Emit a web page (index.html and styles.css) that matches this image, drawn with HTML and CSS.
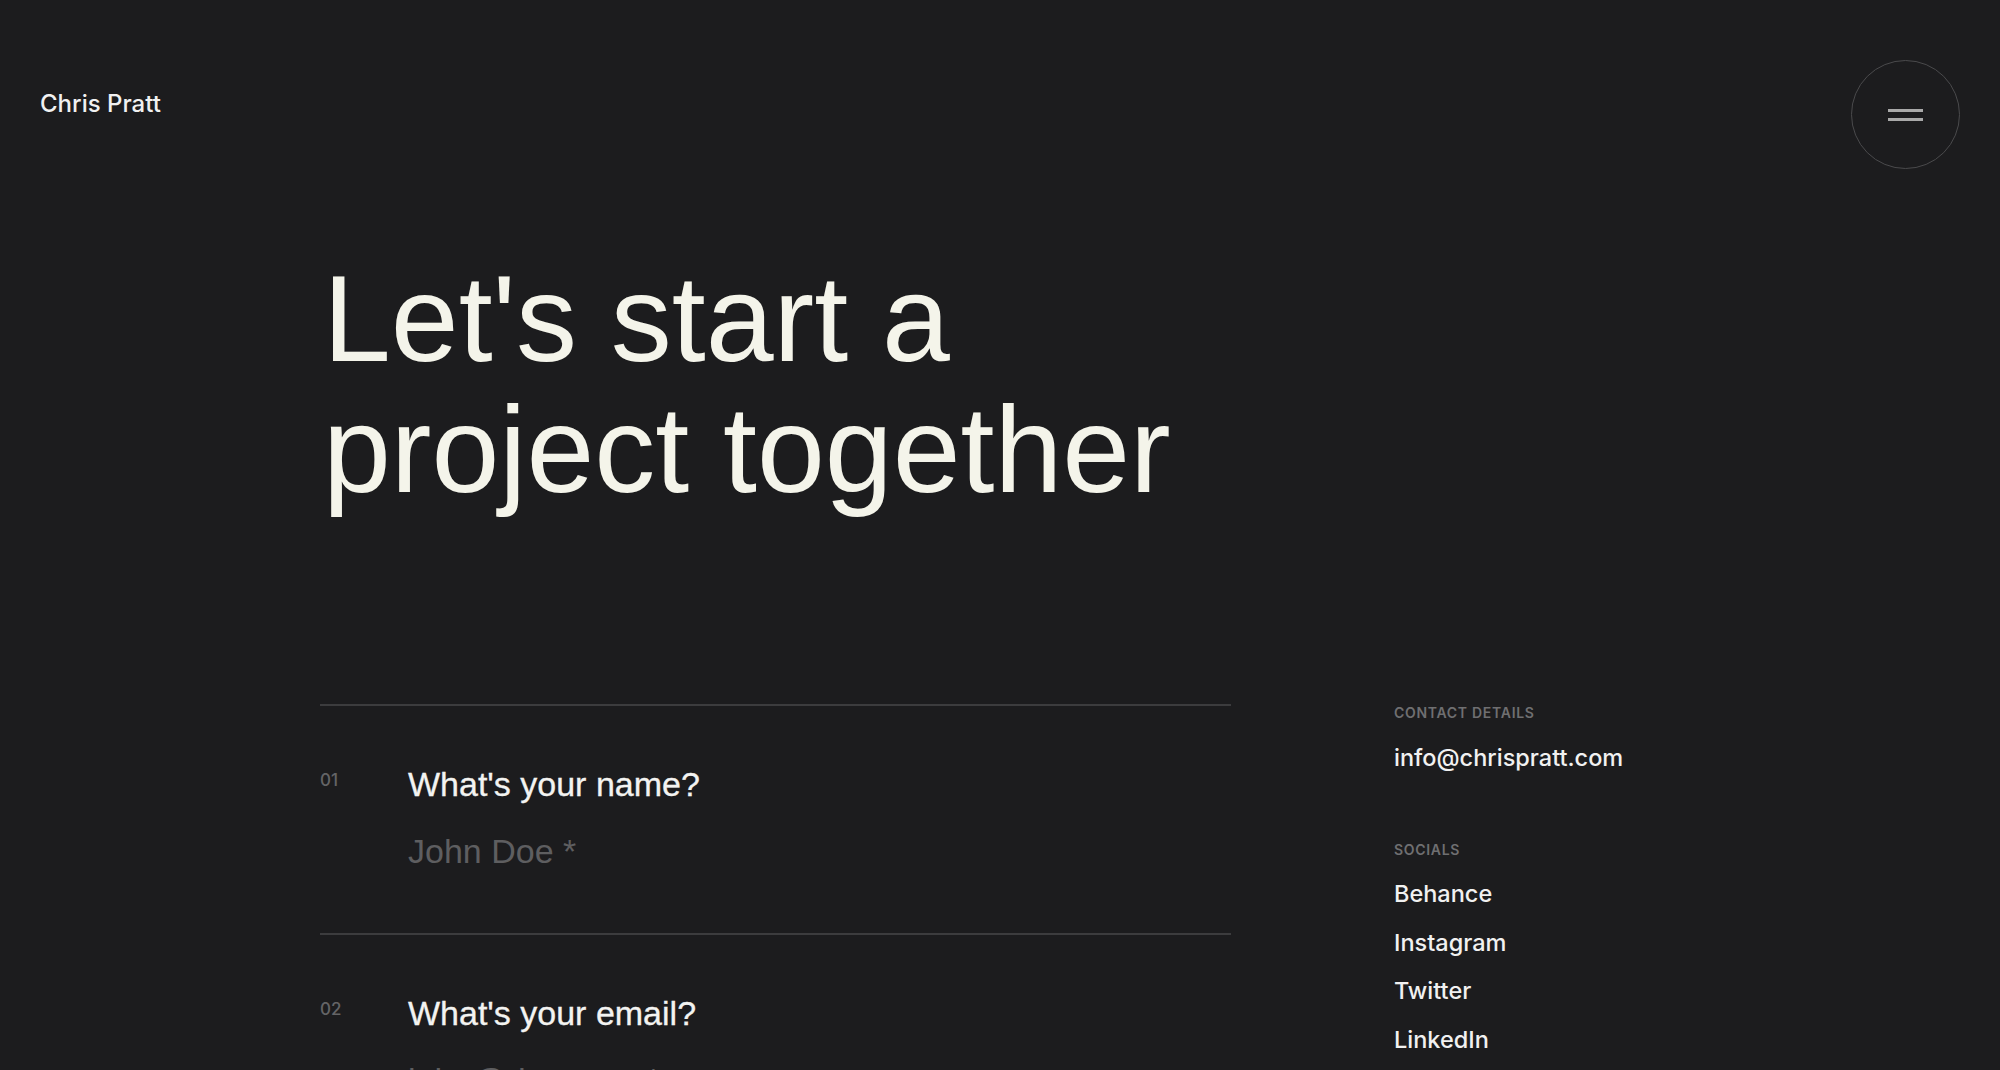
FILE: index.html
```html
<!DOCTYPE html>
<html lang="en">
<head>
<meta charset="utf-8">
<title>Contact — Chris Pratt</title>
<link rel="stylesheet" href="styles.css">
</head>
<body>
<header class="site-header">
  <a class="brand" href="#">Chris Pratt</a>
  <button class="menu-btn" type="button" aria-label="Open menu">
    <span class="menu-bar"></span>
    <span class="menu-bar"></span>
  </button>
</header>
<main class="contact">
  <h1 class="title">Let's start a<br>project together</h1>
  <div class="contact-body">
    <form class="form">
      <div class="field">
        <span class="field-num">01</span>
        <div class="field-main">
          <label class="field-label" for="name">What's your name?</label>
          <input class="field-input" id="name" type="text" placeholder="John Doe *">
        </div>
      </div>
      <div class="field">
        <span class="field-num">02</span>
        <div class="field-main">
          <label class="field-label" for="email">What's your email?</label>
          <input class="field-input" id="email" type="email" placeholder="john@doe.com *">
        </div>
      </div>
    </form>
    <aside class="details">
      <section class="details-group">
        <h5 class="details-title">Contact Details</h5>
        <a class="details-link" href="#">info@chrispratt.com</a>
      </section>
      <section class="details-group details-group-socials">
        <h5 class="details-title">Socials</h5>
        <ul class="social-list">
          <li><a class="details-link" href="#">Behance</a></li>
          <li><a class="details-link" href="#">Instagram</a></li>
          <li><a class="details-link" href="#">Twitter</a></li>
          <li><a class="details-link" href="#">LinkedIn</a></li>
        </ul>
      </section>
    </aside>
  </div>
</main>
</body>
</html>
```
FILE: styles.css
```css
* { box-sizing: border-box; }

html, body {
  margin: 0;
  padding: 0;
  height: 100%;
  overflow: hidden;
}

body {
  background: #1c1c1e;
  color: #f2f2f2;
  font-family: Inter, "Noto Sans", sans-serif;
}

a { color: inherit; text-decoration: none; }

.site-header {
  display: flex;
  justify-content: space-between;
  align-items: flex-start;
  padding: 60px 40px 0 40px;
}

.brand {
  margin-top: 30px;
  font-size: 24px;
  font-weight: 500;
  line-height: 28px;
  color: #f1f1f1;
}

.menu-btn {
  width: 109px;
  height: 109px;
  border-radius: 50%;
  border: 1px solid #4a4a4c;
  background: transparent;
  padding: 0;
  display: flex;
  flex-direction: column;
  align-items: center;
  justify-content: center;
  gap: 6px;
  cursor: pointer;
}

.menu-bar {
  display: block;
  width: 35px;
  height: 3px;
  background: #a9a9a9;
}

.contact {
  padding-left: 320px;
}

.title {
  margin: 85px 0 0 3px;
  font-family: "Liberation Sans", Arial, sans-serif;
  font-weight: 400;
  font-size: 122px;
  line-height: 131px;
  color: #f4f4ea;
}

.contact-body {
  margin-top: 188px;
  display: flex;
  align-items: flex-start;
  gap: 163px;
}

.form {
  width: 911px;
  margin: 0;
}

.field {
  display: flex;
  align-items: flex-start;
  border-top: 2px solid #3c3c3e;
  padding: 59px 0 63px 0;
}

.field-num {
  width: 88px;
  flex: none;
  margin-top: 5px;
  font-size: 17px;
  font-weight: 500;
  line-height: 20px;
  color: #646466;
}

.field-main {
  display: flex;
  flex-direction: column;
  gap: 29px;
  flex: 1;
}

.field-label {
  font-family: "Liberation Sans", Arial, sans-serif;
  font-size: 34px;
  line-height: 38px;
  color: #f3f3f1;
  -webkit-text-stroke: 0.3px #f3f3f1;
}

.field-input {
  height: 38px;
  padding: 0;
  border: 0;
  outline: none;
  background: transparent;
  font-family: "Liberation Sans", Arial, sans-serif;
  font-size: 34px;
  line-height: 38px;
  color: #f3f3f1;
}

.field-input::placeholder {
  color: #5e5e60;
  opacity: 1;
}

.details {
  display: flex;
  flex-direction: column;
}

.details-group {
  display: flex;
  flex-direction: column;
  gap: 23px;
}

.details-group-socials {
  margin-top: 69px;
  gap: 22px;
}

.details-title {
  margin: 0;
  font-size: 14px;
  line-height: 17px;
  font-weight: 600;
  letter-spacing: 0.05em;
  text-transform: uppercase;
  color: #6f6f71;
}

.details-link {
  display: block;
  font-size: 23.5px;
  line-height: 28px;
  font-weight: 500;
  color: #f1f1f1;
}

.social-list {
  list-style: none;
  margin: 0;
  padding: 0;
  display: flex;
  flex-direction: column;
  gap: 20.5px;
}
```
